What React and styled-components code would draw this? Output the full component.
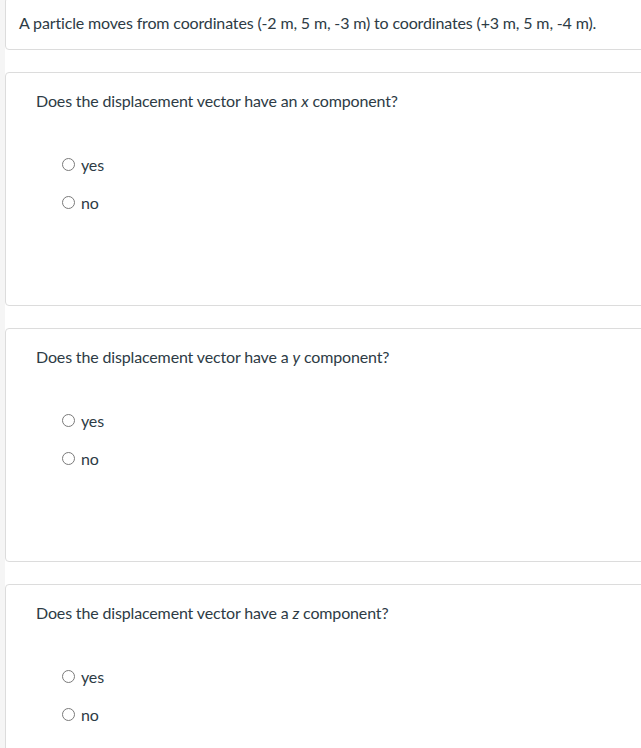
import React from "react";
import styled, { createGlobalStyle } from "styled-components";

const Global = createGlobalStyle`
  html, body { margin: 0; padding: 0; background: #fff; overflow: hidden; }
  body { font-family: Lato, "Open Sans", sans-serif; color: #2d3b45; }
`;

const Page = styled.div`
  border-left: 5px solid #f5f5f5;
  min-height: 748px;
  box-sizing: border-box;
`;

const List = styled.div`
  width: 720px;
  margin-top: -3px;
  display: flex;
  flex-direction: column;
  gap: 22px;
`;

const Card = styled.div`
  border: 1px solid #dcdcdc;
  border-radius: 4px;
  background: #fff;
  box-sizing: border-box;
  padding: ${(p) => (p.$intro ? "13px 13px 14px" : "16px 30px 0")};
  min-height: ${(p) => (p.$intro ? "auto" : "234px")};
`;

const Intro = styled.p`
  margin: 0;
  font-size: 16px;
  line-height: 24px;
  letter-spacing: -0.15px;
`;

const Question = styled.p`
  margin: 0;
  font-size: 16px;
  line-height: 24px;
  letter-spacing: -0.15px;
`;

const Answers = styled.div`
  display: flex;
  flex-direction: column;
  gap: 14px;
  margin-top: 39px;
  padding-left: 26px;
`;

const Option = styled.label`
  display: flex;
  align-items: center;
  gap: 6px;
  height: 24px;
  font-size: 16px;
  letter-spacing: -0.15px;
  color: #2d3b45;
`;

const Radio = styled.span`
  width: 11px;
  height: 11px;
  border: 1.3px solid #7a7a7a;
  border-radius: 50%;
  background: #fff;
  flex: none;
`;

const questions = [
  { axis: "an", v: "x" },
  { axis: "a", v: "y" },
  { axis: "a", v: "z" },
];

export default function App() {
  return (
    <Page>
      <Global />
      <List>
        <Card $intro>
          <Intro>
            A particle moves from coordinates (-2 m, 5 m, -3 m) to coordinates (+3 m, 5 m, -4 m).
          </Intro>
        </Card>
        {questions.map((q) => (
          <Card key={q.v}>
            <Question>
              Does the displacement vector have {q.axis} <i>{q.v}</i> component?
            </Question>
            <Answers>
              <Option>
                <Radio />
                yes
              </Option>
              <Option>
                <Radio />
                no
              </Option>
            </Answers>
          </Card>
        ))}
      </List>
    </Page>
  );
}
